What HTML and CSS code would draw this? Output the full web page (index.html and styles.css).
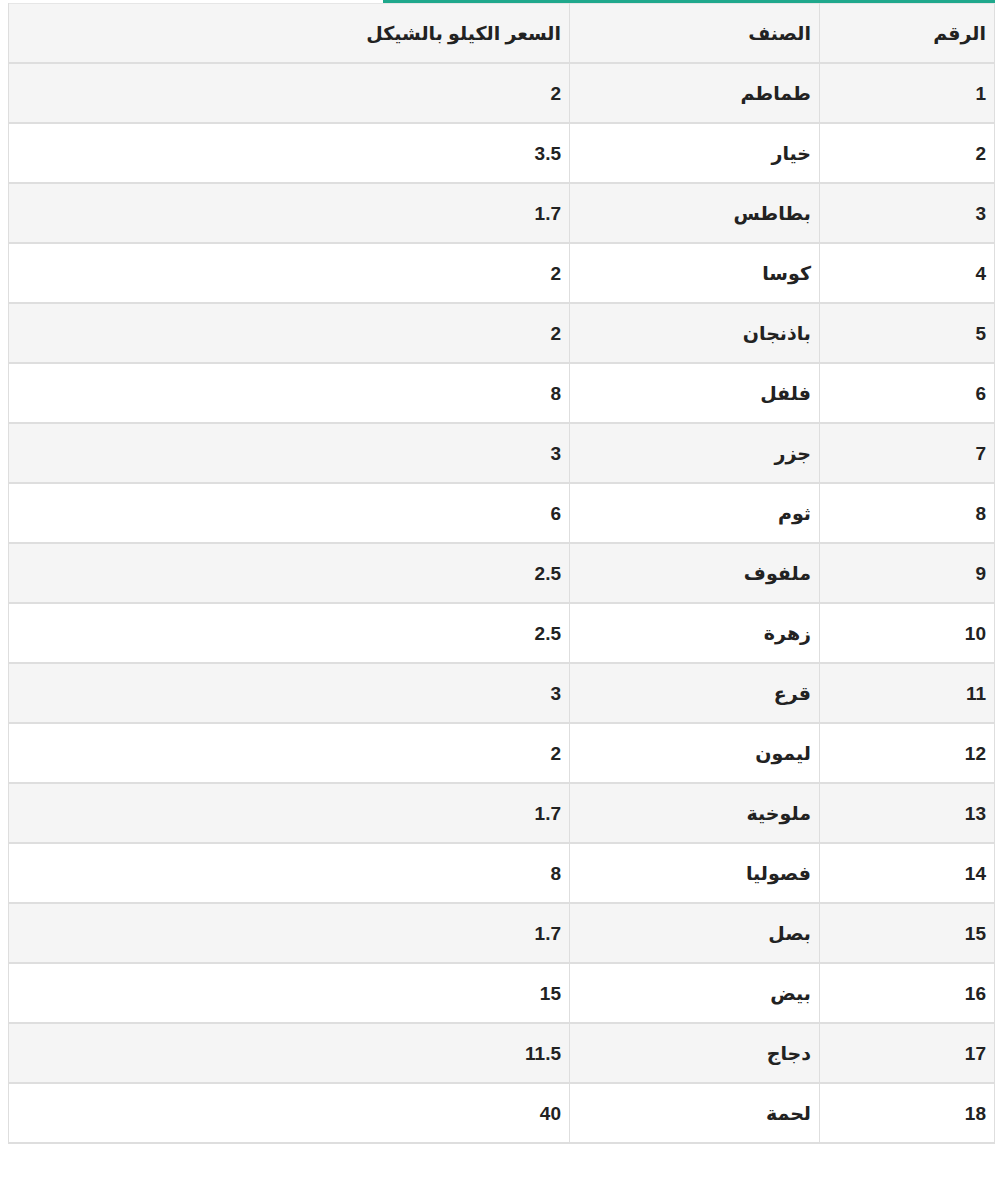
FILE: index.html
```html
<!DOCTYPE html>
<html lang="ar" dir="rtl">
<head>
<meta charset="utf-8">
<title>أسعار الخضار</title>
<link rel="stylesheet" href="styles.css">
</head>
<body>
<div class="wrap">
  <div class="topbar"></div>
  <table class="prices">
    <thead>
      <tr><th class="c-num">الرقم</th><th class="c-item">الصنف</th><th class="c-price">السعر الكيلو بالشيكل</th></tr>
    </thead>
    <tbody>
      <tr><td>1</td><td>طماطم</td><td>2</td></tr>
      <tr><td>2</td><td>خيار</td><td>3.5</td></tr>
      <tr><td>3</td><td>بطاطس</td><td>1.7</td></tr>
      <tr><td>4</td><td>كوسا</td><td>2</td></tr>
      <tr><td>5</td><td>باذنجان</td><td>2</td></tr>
      <tr><td>6</td><td>فلفل</td><td>8</td></tr>
      <tr><td>7</td><td>جزر</td><td>3</td></tr>
      <tr><td>8</td><td>ثوم</td><td>6</td></tr>
      <tr><td>9</td><td>ملفوف</td><td>2.5</td></tr>
      <tr><td>10</td><td>زهرة</td><td>2.5</td></tr>
      <tr><td>11</td><td>قرع</td><td>3</td></tr>
      <tr><td>12</td><td>ليمون</td><td>2</td></tr>
      <tr><td>13</td><td>ملوخية</td><td>1.7</td></tr>
      <tr><td>14</td><td>فصوليا</td><td>8</td></tr>
      <tr><td>15</td><td>بصل</td><td>1.7</td></tr>
      <tr><td>16</td><td>بيض</td><td>15</td></tr>
      <tr><td>17</td><td>دجاج</td><td>11.5</td></tr>
      <tr><td>18</td><td>لحمة</td><td>40</td></tr>
    </tbody>
  </table>
</div>
</body>
</html>
```
FILE: styles.css
```css
html, body {
  margin: 0;
  padding: 0;
  background: #ffffff;
}
body {
  font-family: "Liberation Sans", "DejaVu Sans", sans-serif;
  color: #222222;
}
.wrap {
  width: 987px;
  margin: 0 5px 0 8px;
}
.topbar {
  height: 3px;
  width: 612px;
  background: #1fa88c;
}
.prices {
  width: 987px;
  border-collapse: collapse;
  table-layout: fixed;
  font-size: 19px;
  font-weight: bold;
  line-height: 24px;
}
.prices th,
.prices td {
  text-align: right;
  padding: 2px 8px 0;
  height: 56px;
  border-right: 1px solid #dedede;
  border-left: 1px solid #dedede;
  border-bottom: 2px solid #dedede;
  vertical-align: middle;
}
.prices th {
  border-top: 1px solid #e6e6e6;
  background: #f5f5f5;
}
.prices .c-num { width: 158px; }
.prices .c-item { width: 233px; }
.prices tbody tr:nth-child(odd) td {
  background: #f5f5f5;
}
```
